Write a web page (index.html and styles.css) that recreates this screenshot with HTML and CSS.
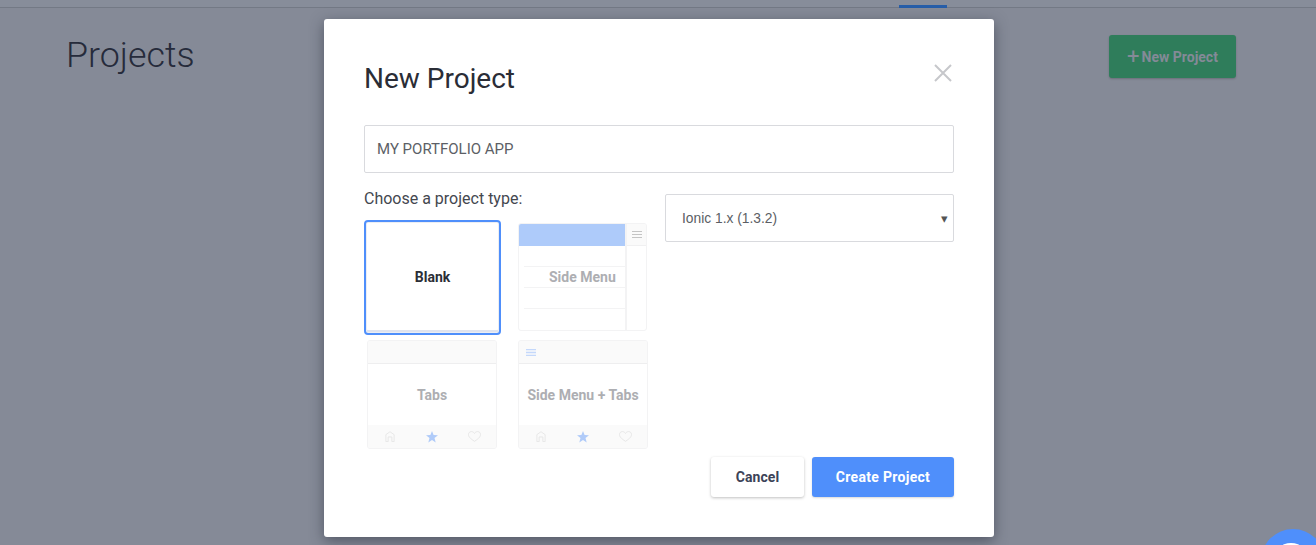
FILE: index.html
```html
<!DOCTYPE html>
<html lang="en">
<head>
<meta charset="utf-8">
<title>Projects</title>
<link rel="stylesheet" href="styles.css">
</head>
<body>
<header class="topbar"><span class="tab-active"></span></header>
<main class="page">
  <h1 class="page-title">Projects</h1>
  <button class="new-btn"><span class="plus">+</span>New Project</button>
</main>
<div class="fab-clip"><div class="fab"><span class="fab-dot"></span></div></div>
<section class="modal">
  <div class="modal-head">
    <h2 class="modal-title">New Project</h2>
    <svg class="close" width="18" height="18" viewBox="0 0 18 18"><path d="M1 1L17 17M17 1L1 17" stroke="#c6c7cb" stroke-width="2" fill="none"/></svg>
  </div>
  <div class="name-input">MY PORTFOLIO APP</div>
  <div class="columns">
    <div class="left">
      <div class="label">Choose a project type:</div>
      <div class="types">
        <div class="type blank"><span class="type-name">Blank</span></div>
        <div class="type sidemenu">
          <div class="sm-main">
            <div class="sm-bar"></div>
            <div class="sm-row"></div><div class="sm-row"></div><div class="sm-row"></div>
          </div>
          <div class="sm-side">
            <div class="sm-side-head"><svg width="10" height="7" viewBox="0 0 10 7"><path d="M0 .5H10M0 3.500H10M0 6.500H10" stroke="#c4c4c4" stroke-width="1.200"/></svg></div>
          </div>
          <span class="type-name overlay">Side Menu</span>
        </div>
        <div class="type tabs tabs-first">
          <div class="t-head"></div>
          <div class="t-body"><span class="type-name">Tabs</span></div>
          <div class="t-foot">
            <svg width="10" height="11" viewBox="0 0 10 12"><path d="M.5 11.500V4L5 .8 9.500 4V11.500H7V6.500H3V11.500Z" fill="none" stroke="#e6e6e6"/></svg>
            <svg width="12" height="12" viewBox="0 0 12 12"><path d="M6 0 7.600 4.100 12 4.300 8.500 7.100 9.700 11.500 6 9.100 2.300 11.500 3.500 7.100 0 4.300 4.400 4.100Z" fill="#b0cbf9"/></svg>
            <svg width="13" height="11" viewBox="0 0 13 11"><path d="M6.500 10.300C2 7.500.5 5.500.5 3.500.5 1.800 1.800.6 3.400.6 4.800.6 5.900 1.400 6.500 2.500 7.100 1.400 8.200.6 9.600.6 11.200.6 12.500 1.800 12.500 3.500 12.500 5.500 11 7.500 6.500 10.300Z" fill="none" stroke="#e6e6e6"/></svg>
          </div>
        </div>
        <div class="type tabs">
          <div class="t-head"><svg width="10" height="7" viewBox="0 0 10 7"><path d="M0 .5H10M0 3.500H10M0 6.500H10" stroke="#c4d8fb" stroke-width="1.300"/></svg></div>
          <div class="t-body"><span class="type-name">Side Menu + Tabs</span></div>
          <div class="t-foot">
            <svg width="10" height="11" viewBox="0 0 10 12"><path d="M.5 11.500V4L5 .8 9.500 4V11.500H7V6.500H3V11.500Z" fill="none" stroke="#e6e6e6"/></svg>
            <svg width="12" height="12" viewBox="0 0 12 12"><path d="M6 0 7.600 4.100 12 4.300 8.500 7.100 9.700 11.500 6 9.100 2.300 11.500 3.500 7.100 0 4.300 4.400 4.100Z" fill="#b0cbf9"/></svg>
            <svg width="13" height="11" viewBox="0 0 13 11"><path d="M6.500 10.300C2 7.500.5 5.500.5 3.500.5 1.800 1.800.6 3.400.6 4.800.6 5.900 1.400 6.500 2.500 7.100 1.400 8.200.6 9.600.6 11.200.6 12.500 1.800 12.500 3.500 12.500 5.500 11 7.500 6.500 10.300Z" fill="none" stroke="#e6e6e6"/></svg>
          </div>
        </div>
      </div>
    </div>
    <div class="select"><span>Ionic 1.x (1.3.2)</span><span class="caret">▾</span></div>
  </div>
  <div class="actions">
    <button class="btn cancel">Cancel</button>
    <button class="btn create">Create Project</button>
  </div>
</section>
</body>
</html>
```
FILE: styles.css
```css
* { box-sizing: border-box; }
html { margin: 0; height: 545px; overflow: hidden; }
body {
  margin: 0;
  position: relative;
  height: 545px;
  overflow: hidden;
  background: #858a97;
  font-family: Roboto, "Liberation Sans", sans-serif;
  color: #2b2f3c;
}
.topbar {
  height: 8px;
  background: #878d9a;
  border-bottom: 1px solid #737985;
  position: relative;
}
.tab-active {
  position: absolute;
  left: 899px;
  bottom: -1px;
  width: 48px;
  height: 3px;
  background: #265da8;
}
.page {
  display: flex;
  justify-content: space-between;
  align-items: flex-start;
  padding: 27px 80px 0 66px;
}
.page-title {
  margin: 0;
  font-size: 35.800px;
  line-height: 41px;
  font-weight: 300;
  color: #262b3b;
}
.new-btn {
  width: 127px;
  height: 43px;
  border: 0;
  border-radius: 3px;
  background: #2f7d5b;
  color: #848a97;
  font: 700 14px Roboto, sans-serif;
  box-shadow: 0 1px 2px rgba(0,0,0,.2);
  padding: 0;
}
.plus { font-size: 22px; font-weight: 400; line-height: 20px; vertical-align: -2px; margin-right: 2px; }
.fab-clip {
  position: absolute;
  left: 1261px;
  top: 529px;
  width: 55px;
  height: 16px;
  overflow: hidden;
}
.fab {
  position: relative;
  width: 64px;
  height: 64px;
  border-radius: 50%;
  background: #4f8ffb;
}
.fab-dot {
  position: absolute;
  left: 12px;
  top: 14px;
  width: 36px;
  height: 36px;
  border-radius: 50%;
  background: #fff;
}
.modal {
  position: absolute;
  left: 324px;
  top: 19px;
  width: 670px;
  height: 518px;
  padding: 40px;
  background: #fff;
  border-radius: 3px;
  box-shadow: 0 4px 14px rgba(40,45,60,.55);
  display: flex;
  flex-direction: column;
}
.modal-head {
  display: flex;
  justify-content: space-between;
  align-items: flex-start;
  height: 66px;
}
.modal-title {
  margin: 0;
  font-size: 28px;
  line-height: 40px;
  font-weight: 400;
  color: #2a2d36;
}
.close { margin: 5px 2px 0 0; }
.name-input {
  height: 48px;
  border: 1px solid #d9dade;
  border-radius: 2px;
  padding: 0 12px;
  font-size: 15px;
  line-height: 46px;
  color: #5c5f66;
}
.columns { display: flex; gap: 17px; margin-top: 15px; }
.left { width: 284px; }
.label {
  font-size: 16px;
  line-height: 22px;
  color: #44474f;
  margin-bottom: 10px;
}
.types {
  display: grid;
  grid-template-columns: 137px 131px;
  grid-template-rows: 115px 109px;
  column-gap: 17px;
  row-gap: 5px;
}
.type {
  position: relative;
  border: 1px solid #f3f3f4;
  border-radius: 3px;
  overflow: hidden;
}
.type-name { color: #adaeb2; font-weight: 700; font-size: 14px; }
.blank {
  display: flex;
  align-items: center;
  justify-content: center;
  padding-bottom: 2px;
  border: 2px solid #4f8ffb;
  border-radius: 4px;
  box-shadow: inset 0 0 0 1px #eceef3, inset 0 -3px 0 #dfe3ee;
  background: #fff;
}
.blank .type-name { color: #2c2e36; }
.sidemenu { display: flex; width: 129px; height: 108px; margin-top: 3px; background: #fff; }
.sm-main { width: 106px; }
.sm-bar { height: 22px; background: #aecbfa; }
.sm-row { height: 21px; border-bottom: 1px solid #f3f3f4; margin-left: 5px; }
.sm-side { flex: 1; border-left: 2px solid #f3f3f4; }
.sm-side-head {
  height: 22px;
  background: #fafafa;
  border-bottom: 1px solid #f0f0f1;
  display: flex;
  align-items: center;
  justify-content: center;
}
.overlay { position: absolute; left: 30px; top: 45px; line-height: 16px; }
.tabs {
  display: flex;
  flex-direction: column;
  width: 130px;
  height: 109px;
  background: #fff;
}
.tabs-first { margin-left: 3px; }
.t-head {
  height: 23px;
  background: #fafafa;
  border-bottom: 1px solid #eeeeef;
  display: flex;
  align-items: center;
  padding-left: 7px;
}
.t-body { flex: 1; display: flex; align-items: center; justify-content: center; }
.t-foot {
  height: 23px;
  background: #fafafa;
  display: grid;
  grid-template-columns: repeat(3, 42px);
  justify-content: center;
  justify-items: center;
  align-items: center;
}
.select {
  width: 289px;
  height: 48px;
  display: flex;
  align-items: center;
  justify-content: space-between;
  border: 1px solid #d9dade;
  border-radius: 2px;
  margin-top: 6px;
  padding: 0 5px 0 16px;
  font-family: "Liberation Sans", sans-serif;
  font-size: 13.800px;
  color: #5b5e64;
}
.caret { font-size: 13px; color: #555; }
.actions {
  position: absolute;
  right: 40px;
  bottom: 40px;
  display: flex;
  gap: 8px;
}
.btn {
  height: 40px;
  border: 0;
  border-radius: 3px;
  font: 700 14px Roboto, sans-serif;
  padding: 0;
}
.cancel {
  width: 93px;
  background: #fff;
  color: #3c4358;
  letter-spacing: .1px;
  box-shadow: 0 1px 3px rgba(0,0,0,.25);
}
.create {
  width: 142px;
  background: #4f8ffb;
  color: #fff;
  letter-spacing: .3px;
  box-shadow: 0 1px 2px rgba(0,0,0,.15);
}
```
